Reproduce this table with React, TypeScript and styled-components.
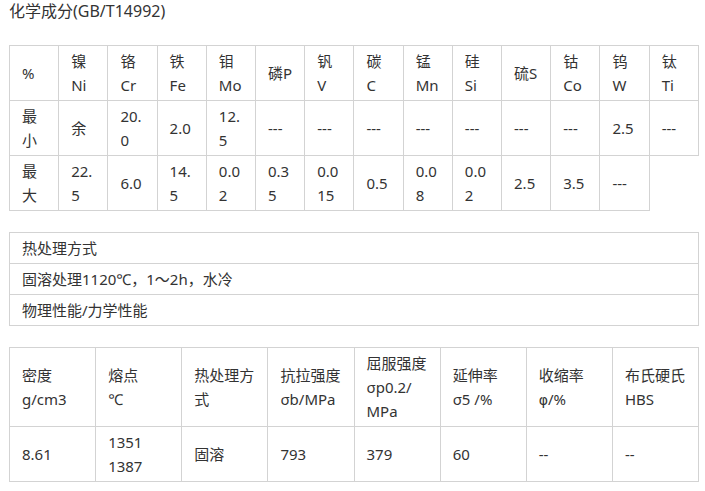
import React from "react";
import styled, { createGlobalStyle } from "styled-components";

const GlobalStyle = createGlobalStyle`
  html, body { margin: 0; padding: 0; background: #ffffff; }
  body {
    font-family: "Noto Sans", "Noto Sans CJK SC", sans-serif;
    color: #333333;
  }
`;

const Page = styled.div`
  width: 705px;
  padding: 0 0 0 9px;
  box-sizing: border-box;
  display: flex;
  flex-direction: column;
`;

const Title = styled.div`
  font-size: 16px;
  line-height: 22px;
  height: 22px;
  margin-bottom: 23px;
  white-space: nowrap;
`;

const Table = styled.table<{ $mb?: number }>`
  width: 690px;
  border-collapse: collapse;
  table-layout: fixed;
  margin-bottom: ${(p) => p.$mb ?? 0}px;
  font-size: 15px;
  line-height: 24px;
`;

const Cell = styled.td`
  border: 1px solid #d3d3d3;
  padding: 3px 12px;
  vertical-align: middle;
  text-align: left;
  white-space: nowrap;
  overflow: hidden;
`;

const Greek = styled.span`
  font-family: "DejaVu Sans", "Noto Sans", sans-serif;
  font-size: 14px;
`;

const Lines: React.FC<{ v: string }> = ({ v }) => (
  <>
    {v.split("|").map((s, i) => (
      <React.Fragment key={i}>
        {i > 0 && <br />}
        {s.startsWith("φ") ? (
          <>
            <Greek>φ</Greek>
            {s.slice(1)}
          </>
        ) : (
          s
        )}
      </React.Fragment>
    ))}
  </>
);

const chemRows: string[][] = [
  ["%", "镍|Ni", "铬|Cr", "铁|Fe", "钼|Mo", "磷P", "钒|V", "碳|C", "锰|Mn", "硅|Si", "硫S", "钴|Co", "钨|W", "钛|Ti"],
  ["最|小", "余", "20.|0", "2.0", "12.|5", "---", "---", "---", "---", "---", "---", "---", "2.5", "---"],
  ["最|大", "22.|5", "6.0", "14.|5", "0.0|2", "0.3|5", "0.0|15", "0.5", "0.0|8", "0.0|2", "2.5", "3.5", "---"],
];

const heatRows = ["热处理方式", "固溶处理1120℃，1～2h，水冷", "物理性能/力学性能"];

const physRows: string[][] = [
  ["密度|g/cm3", "熔点|℃", "热处理方|式", "抗拉强度|σb/MPa", "屈服强度|σp0.2/|MPa", "延伸率|σ5 /%", "收缩率|φ/%", "布氏硬氏|HBS"],
  ["8.61", "1351|1387", "固溶", "793", "379", "60", "--", "--"],
];

export default function App() {
  return (
    <>
      <GlobalStyle />
      <Page>
        <Title>化学成分(GB/T14992)</Title>
        <Table $mb={21}>
          <tbody>
            {chemRows.map((row, r) => (
              <tr key={r}>
                {row.map((c, i) => (
                  <Cell key={i}>
                    <Lines v={c} />
                  </Cell>
                ))}
              </tr>
            ))}
          </tbody>
        </Table>
        <Table $mb={21}>
          <tbody>
            {heatRows.map((t, r) => (
              <tr key={r}>
                <Cell>{t}</Cell>
              </tr>
            ))}
          </tbody>
        </Table>
        <Table>
          <tbody>
            {physRows.map((row, r) => (
              <tr key={r}>
                {row.map((c, i) => (
                  <Cell key={i}>
                    <Lines v={c} />
                  </Cell>
                ))}
              </tr>
            ))}
          </tbody>
        </Table>
      </Page>
    </>
  );
}
